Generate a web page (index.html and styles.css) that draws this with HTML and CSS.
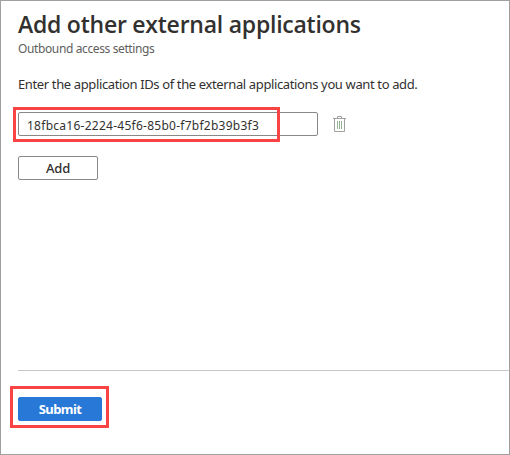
FILE: index.html
```html
<!DOCTYPE html>
<html lang="en">
<head>
<meta charset="utf-8">
<title>Add other external applications</title>
<link rel="stylesheet" href="styles.css">
</head>
<body>
<main class="panel">
  <header class="header">
    <h1 class="title">Add other external applications</h1>
    <p class="subtitle">Outbound access settings</p>
  </header>
  <section class="content">
    <p class="hint">Enter the application IDs of the external applications you want to add.</p>
    <div class="row">
      <div class="field">18fbca16-2224-45f6-85b0-f7bf2b39b3f3<i class="mark mark-field"></i></div>
      <svg class="trash" width="13" height="16" viewBox="0 0 13 16" fill="none" stroke="#a0a0a0">
        <path d="M4.5 2V.5h4V2M0 2.5h13M1.5 3v12.5h10V3"/>
        <path stroke="#93b093" d="M4.5 5v8M6.5 5v8M8.5 5v8"/>
      </svg>
    </div>
    <button class="btn add">Add</button>
  </section>
  <footer class="footer">
    <button class="btn submit">Submit<i class="mark mark-submit"></i></button>
  </footer>
</main>
</body>
</html>
```
FILE: styles.css
```css
* { box-sizing: border-box; }
body {
  margin: 0;
  background: #fff;
  color: #323130;
  font-family: "Noto Sans", "Open Sans", sans-serif;
}
.panel {
  display: flex;
  flex-direction: column;
  width: 510px;
  height: 455px;
  padding-left: 17px;
  border: 1px solid #a0a0a0;
}
.header { padding-top: 7px; }
.title {
  margin: 0;
  font-family: "Open Sans", sans-serif;
  font-size: 23px;
  line-height: 32px;
  font-weight: 600;
  letter-spacing: -0.24px;
  white-space: nowrap;
}
.subtitle {
  margin: 1px 0 0;
  font-size: 12px;
  line-height: 16px;
  letter-spacing: -0.38px;
  color: #605e5c;
}
.content { flex: 1; }
.hint {
  margin: 18px 0 0;
  font-size: 13px;
  line-height: 18px;
  letter-spacing: -0.37px;
  white-space: nowrap;
}
.row {
  display: flex;
  align-items: center;
  gap: 15px;
  margin-top: 19px;
}
.field {
  position: relative;
  width: 300px;
  height: 24px;
  padding-left: 8px;
  border: 1px solid #8a8886;
  border-radius: 2px;
  font-size: 12px;
  line-height: 25px;
  letter-spacing: 0.26px;
  white-space: nowrap;
}
.trash { display: block; }
.mark {
  position: absolute;
  border: 3px solid #fa4343;
}
.mark-field {
  left: -6px;
  top: -6px;
  width: 267px;
  height: 35px;
}
.btn {
  position: relative;
  display: block;
  height: 24px;
  padding: 0;
  border: 1px solid #8a8886;
  border-radius: 2px;
  background: #fff;
  color: #323130;
  font: 500 13px/22px "Noto Sans", "Open Sans", sans-serif;
  letter-spacing: -0.2px;
}
.add {
  width: 80px;
  margin-top: 20px;
}
.footer {
  height: 84px;
  padding-top: 26px;
  border-top: 1px solid #c8c8c8;
}
.submit {
  width: 84px;
  border-color: #2878d8;
  background: #2878d8;
  color: #fff;
  font-weight: 700;
  letter-spacing: -0.55px;
}
.mark-submit {
  left: -9px;
  top: -12px;
  width: 99px;
  height: 42px;
}
```
